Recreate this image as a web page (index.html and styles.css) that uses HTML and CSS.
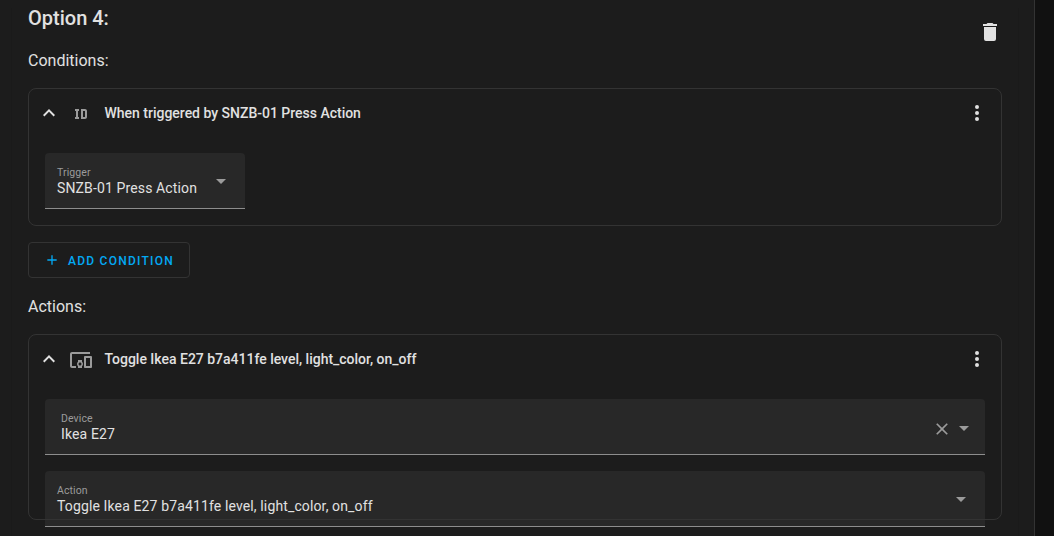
FILE: index.html
```html
<!DOCTYPE html>
<html lang="en">
<head>
<meta charset="utf-8">
<title>Automation editor</title>
<link rel="stylesheet" href="styles.css">
</head>
<body>
<main class="panel">
  <section class="option">
    <header class="option-head">
      <h3 class="option-title">Option 4:</h3>
      <svg class="icon delete" viewBox="0 0 24 24"><path d="M19,4H15.5L14.5,3H9.5L8.5,4H5V6H19M6,19A2,2 0 0,0 8,21H16A2,2 0 0,0 18,19V7H6V19Z"/></svg>
    </header>
    <h4 class="label conditions">Conditions:</h4>
    <article class="card condition-card">
      <header class="card-head">
        <svg class="icon" viewBox="0 0 24 24"><path d="M7.41,15.41L12,10.83L16.59,15.41L18,14L12,8L6,14L7.41,15.41Z"/></svg>
        <svg class="icon kind" viewBox="0 0 24 24"><path d="M10 7V9H9V15H10V17H6V15H7V9H6V7H10M16 7C17.11 7 18 7.9 18 9V15C18 16.11 17.11 17 16 17H12V7M16 9H14V15H16V9Z"/></svg>
        <span class="card-title">When triggered by SNZB-01 Press Action</span>
        <svg class="icon" viewBox="0 0 24 24"><path d="M12,16A2,2 0 0,1 12,20A2,2 0 0,1 12,16M12,10A2,2 0 0,1 12,14A2,2 0 0,1 12,10M12,4A2,2 0 0,1 12,8A2,2 0 0,1 12,4Z"/></svg>
      </header>
      <div class="field trigger">
        <div class="field-text"><span class="field-label">Trigger</span><span class="field-value">SNZB-01 Press Action</span></div>
        <svg class="icon arrow" viewBox="0 0 24 24"><path d="M7,10L12,15L17,10H7Z"/></svg>
      </div>
    </article>
    <button class="add" type="button">
      <svg class="plus" viewBox="0 0 24 24"><path d="M19,13H13V19H11V13H5V11H11V5H13V11H19V13Z"/></svg>
      <span>ADD CONDITION</span>
    </button>
    <h4 class="label actions">Actions:</h4>
    <article class="card action-card">
      <header class="card-head">
        <svg class="icon" viewBox="0 0 24 24"><path d="M7.41,15.41L12,10.83L16.59,15.41L18,14L12,8L6,14L7.41,15.41Z"/></svg>
        <svg class="icon kind" viewBox="0 0 24 24"><path d="M3 6H21V4H3C1.9 4 1 4.9 1 6V18C1 19.1 1.9 20 3 20H7V18H3V6M13 12H9V13.78C8.39 14.33 8 15.11 8 16C8 16.89 8.39 17.67 9 18.22V20H13V18.22C13.61 17.67 14 16.88 14 16S13.61 14.33 13 13.78V12M11 17.5C10.17 17.5 9.5 16.83 9.5 16S10.17 14.5 11 14.5 12.5 15.17 12.5 16 11.83 17.5 11 17.5M22 8H16C15.5 8 15 8.5 15 9V19C15 19.5 15.5 20 16 20H22C22.5 20 23 19.5 23 19V9C23 8.5 22.5 8 22 8M21 18H17V10H21V18Z"/></svg>
        <span class="card-title">Toggle Ikea E27 b7a411fe level, light_color, on_off</span>
        <svg class="icon" viewBox="0 0 24 24"><path d="M12,16A2,2 0 0,1 12,20A2,2 0 0,1 12,16M12,10A2,2 0 0,1 12,14A2,2 0 0,1 12,10M12,4A2,2 0 0,1 12,8A2,2 0 0,1 12,4Z"/></svg>
      </header>
      <div class="field device">
        <div class="field-text"><span class="field-label">Device</span><span class="field-value">Ikea E27</span></div>
        <svg class="clear" viewBox="0 0 24 24"><path d="M19,6.41L17.59,5L12,10.59L6.41,5L5,6.41L10.59,12L5,17.59L6.41,19L12,13.41L17.59,19L19,17.59L13.41,12L19,6.41Z"/></svg>
        <svg class="icon arrow" viewBox="0 0 24 24"><path d="M7,10L12,15L17,10H7Z"/></svg>
      </div>
      <div class="field action">
        <div class="field-text"><span class="field-label">Action</span><span class="field-value">Toggle Ikea E27 b7a411fe level, light_color, on_off</span></div>
        <svg class="icon arrow" viewBox="0 0 24 24"><path d="M7,10L12,15L17,10H7Z"/></svg>
      </div>
    </article>
  </section>
</main>
</body>
</html>
```
FILE: styles.css
```css
* { box-sizing: border-box; }

body {
  margin: 0;
  height: 536px;
  overflow: hidden;
  background: #111111;
  color: #e1e1e1;
  font-family: Roboto, "Noto Sans", sans-serif;
}

.panel {
  width: 1035px;
  height: 536px;
  padding: 8px 15px 0 11px;
  overflow: hidden;
  background: #1c1c1c;
  border-right: 1px solid #333333;
}

.option {
  display: flex;
  flex-direction: column;
  align-items: stretch;
  height: 528px;
  padding: 0 16px;
  border: solid #1a1a1a;
  border-width: 0 1px;
}

.option-head {
  display: flex;
  justify-content: space-between;
  flex: none;
  height: 40px;
}

.option-title {
  margin: -2px 0 0;
  font-size: 20px;
  font-weight: 500;
  line-height: 24px;
}

.icon {
  flex: none;
  width: 24px;
  height: 24px;
  fill: #e1e1e1;
}

.delete { margin-top: 12px; }

.label {
  flex: none;
  height: 24px;
  margin: 0;
  padding-top: 1px;
  font-size: 16px;
  font-weight: 400;
  line-height: 24px;
}

.card {
  position: relative;
  flex: none;
  width: 974px;
  padding: 1px 17px;
}

/* The outline stays visible over fields that run past the card. */
.card::after {
  content: "";
  position: absolute;
  inset: 0;
  border: 1px solid #333333;
  border-radius: 8px;
  pointer-events: none;
}

.condition-card { height: 138px; margin-top: 16px; }
.action-card { height: 186px; margin-top: 16px; }

.card-head {
  display: flex;
  align-items: center;
  height: 48px;
  margin-left: -8px;
  margin-right: -4px;
}

.kind {
  margin: 2px 11.5px 0 8px;
  fill: #9b9b9b;
}

.card-title {
  flex: 1;
  font-size: 14px;
  font-weight: 500;
  line-height: 20px;
  letter-spacing: -0.01px;
}

.field {
  display: flex;
  height: 56px;
  margin-top: 16px;
  padding-left: 12px;
  background: #282828;
  border-bottom: 1px solid #8d8d8d;
  border-radius: 4px 4px 0 0;
}

.trigger { width: 200px; padding-right: 12px; }
.device { padding: 0 9px 0 16px; }
.action { padding-right: 12px; }

.field-text {
  display: flex;
  flex-direction: column;
  flex: 1;
  padding-top: 12px;
}

.field-label {
  font-size: 10.5px;
  line-height: 15px;
  letter-spacing: 0.1px;
  color: #9b9b9b;
}

.field-value {
  font-size: 14px;
  line-height: 17px;
  letter-spacing: 0.13px;
  white-space: nowrap;
}

.arrow { margin-top: 16px; fill: #9b9b9b; }
.device .arrow { margin-top: 17px; }

.clear {
  width: 20px;
  height: 20px;
  margin: 20px 0 0;
  fill: #9b9b9b;
}

.add {
  display: flex;
  align-items: center;
  gap: 8px;
  flex: none;
  width: 162px;
  height: 36px;
  margin: 16px 0 0;
  padding: 0 0 0 15px;
  background: none;
  border: 1px solid #333333;
  border-radius: 4px;
  color: #03a9f4;
  font: 500 12px/16px Roboto, sans-serif;
  letter-spacing: 1.25px;
}

.add span { padding-top: 2px; }

.plus { width: 16px; height: 16px; fill: #03a9f4; }

.actions { margin-top: 16px; }
```
